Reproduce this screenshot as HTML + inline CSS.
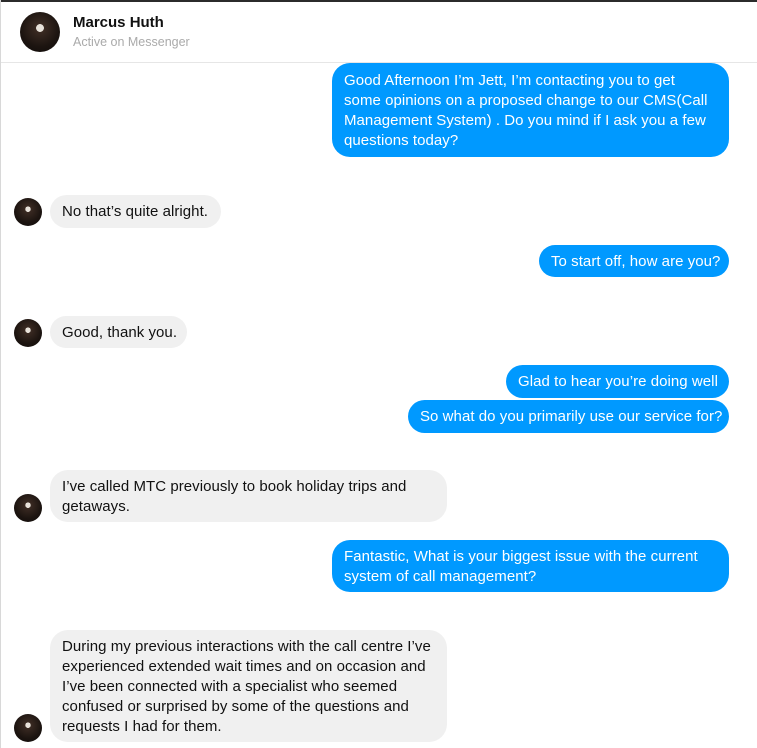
<!DOCTYPE html>
<html><head><meta charset="utf-8"><style>
*{margin:0;padding:0;box-sizing:border-box}
body{width:757px;height:748px;overflow:hidden;background:#fff;font-family:"Liberation Sans",sans-serif;position:relative}
.top{position:absolute;left:0;top:0;width:757px;height:2px;background:#2b2b2b}
.lb{position:absolute;left:0;top:0;width:1px;height:748px;background:#d8d8d8}
.hdr{position:absolute;left:1px;top:2px;width:756px;height:61px;border-bottom:1px solid #e6e6e6;background:#fff;z-index:2}
.av{position:absolute;border-radius:50%;background:radial-gradient(circle at 50% 40%,#e8e2da 0 12%,#3a2a22 13%,#1c1410 60%,#0e0a08 100%);z-index:3}
.name{position:absolute;left:73px;top:14px;font-weight:bold;font-size:15px;color:#111;z-index:3}
.sub{position:absolute;left:73px;top:35px;font-size:12.5px;color:#aaa;z-index:3}
.b{position:absolute;font-size:15px;letter-spacing:0.05px;line-height:20px;padding:7px 12px;border-radius:18px;white-space:nowrap}
.s{background:#0099ff;color:#fff}
.r{background:#f0f0f0;color:#111}
</style></head><body>
<div class="top"></div><div class="lb"></div>
<div class="hdr"></div>
<div class="av" style="left:20px;top:12px;width:40px;height:40px"></div>
<div class="name">Marcus Huth</div>
<div class="sub">Active on Messenger</div>

<div class="b s" style="left:332px;top:63px;width:397px;height:94px;padding-top:8px">Good Afternoon I’m Jett, I’m contacting you to get<br>some opinions on a proposed change to our CMS(Call<br>Management System) . Do you mind if I ask you a few<br>questions today?</div>

<div class="av" style="left:14px;top:198px;width:28px;height:28px"></div>
<div class="b r" style="left:50px;top:195px;width:171px;height:33px">No that’s quite alright.</div>

<div class="b s" style="left:539px;top:245px;width:190px;height:32px">To start off, how are you?</div>

<div class="av" style="left:14px;top:319px;width:28px;height:28px"></div>
<div class="b r" style="left:50px;top:316px;width:137px;height:32px">Good, thank you.</div>

<div class="b s" style="left:506px;top:365px;width:223px;height:33px">Glad to hear you’re doing well</div>
<div class="b s" style="left:408px;top:400px;width:321px;height:33px">So what do you primarily use our service for?</div>

<div class="av" style="left:14px;top:494px;width:28px;height:28px"></div>
<div class="b r" style="left:50px;top:470px;width:397px;height:52px">I’ve called MTC previously to book holiday trips and<br>getaways.</div>

<div class="b s" style="left:332px;top:540px;width:397px;height:52px">Fantastic, What is your biggest issue with the current<br>system of call management?</div>

<div class="av" style="left:14px;top:714px;width:28px;height:28px"></div>
<div class="b r" style="left:50px;top:630px;width:397px;height:112px;padding-top:7px">During my previous interactions with the call centre I’ve<br>experienced extended wait times and on occasion and<br>I’ve been connected with a specialist who seemed<br>confused or surprised by some of the questions and<br>requests I had for them.</div>
</body></html>
